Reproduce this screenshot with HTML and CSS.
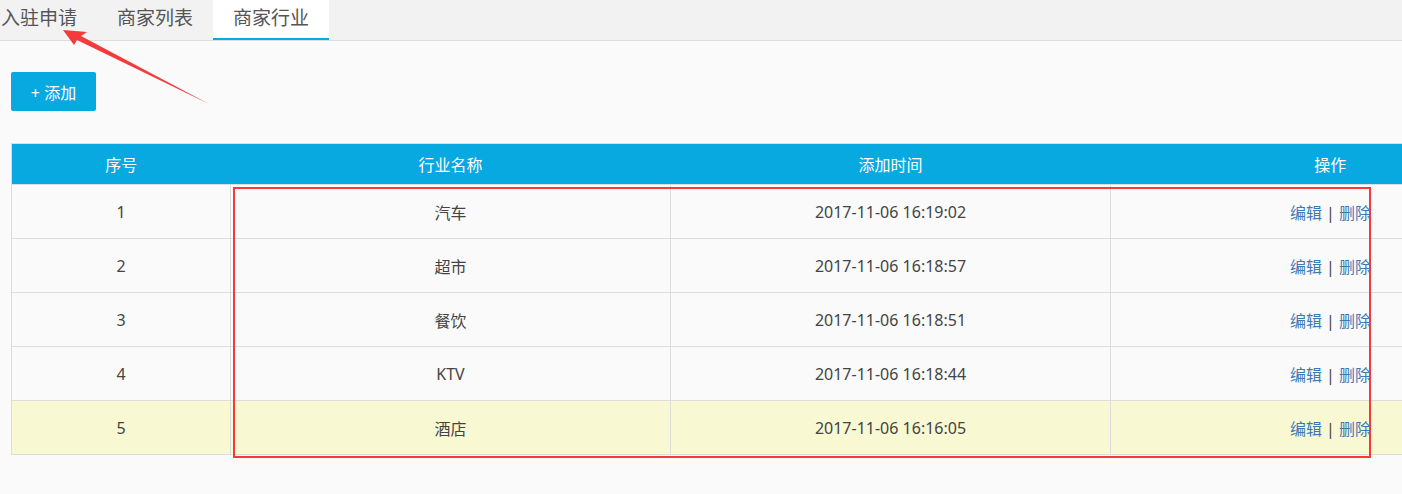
FILE: index.html
```html
<!DOCTYPE html>
<html lang="zh-CN">
<head>
    <meta charset="UTF-8">
    <title>商家行业</title>
    <link rel="stylesheet" href="styles.css">
</head>
<body>
    <div class="tabs">
        <div class="tab">入驻申请</div>
        <div class="tab">商家列表</div>
        <div class="tab active">商家行业</div>
    </div>

    <div class="content">
        <button class="add-btn">+ 添加</button>

        <table class="list">
            <colgroup>
                <col class="col-no">
                <col class="col-wide">
                <col class="col-wide">
                <col class="col-wide">
            </colgroup>
            <thead>
                <tr>
                    <th>序号</th>
                    <th>行业名称</th>
                    <th>添加时间</th>
                    <th>操作</th>
                </tr>
            </thead>
            <tbody>
                <tr>
                    <td>1</td>
                    <td>汽车</td>
                    <td>2017-11-06 16:19:02</td>
                    <td><a href="#">编辑</a> | <a href="#">删除</a></td>
                </tr>
                <tr>
                    <td>2</td>
                    <td>超市</td>
                    <td>2017-11-06 16:18:57</td>
                    <td><a href="#">编辑</a> | <a href="#">删除</a></td>
                </tr>
                <tr>
                    <td>3</td>
                    <td>餐饮</td>
                    <td>2017-11-06 16:18:51</td>
                    <td><a href="#">编辑</a> | <a href="#">删除</a></td>
                </tr>
                <tr>
                    <td>4</td>
                    <td>KTV</td>
                    <td>2017-11-06 16:18:44</td>
                    <td><a href="#">编辑</a> | <a href="#">删除</a></td>
                </tr>
                <tr class="hover">
                    <td>5</td>
                    <td>酒店</td>
                    <td>2017-11-06 16:16:05</td>
                    <td><a href="#">编辑</a> | <a href="#">删除</a></td>
                </tr>
            </tbody>
        </table>
    </div>

    <!-- annotations drawn over the screenshot -->
    <div class="mark-box"></div>
    <svg class="mark-arrow" width="220" height="110" viewBox="0 0 220 110">
        <polygon points="63,30 87,32 81,36 209,104 77,40 74,45" fill="#f43a3a"/>
    </svg>
</body>
</html>
```

FILE: styles.css
```css
body {
    margin: 0;
    background-color: #fafafa;
    font-family: "Noto Sans", "Noto Sans CJK SC", sans-serif;
    color: #444;
    overflow: hidden;
    position: relative;
    height: 494px;
}

.tabs {
    display: flex;
    height: 40px;
    margin-left: -19px;
    background-color: #f2f2f2;
    border-bottom: 1px solid #dddddd;
}

.tab {
    padding: 0 20px;
    height: 40px;
    line-height: 36px;
    font-size: 19px;
    color: #555;
    box-sizing: border-box;
}

.tab.active {
    background-color: #ffffff;
    border-bottom: 2px solid #08a8e0;
}

.content {
    padding: 31px 0 0 11px;
}

.add-btn {
    display: block;
    width: 85px;
    height: 39px;
    padding: 0;
    border: none;
    border-radius: 2px;
    background-color: #08a8e0;
    color: #ffffff;
    font-family: inherit;
    font-size: 16px;
    cursor: pointer;
}

.list {
    margin-top: 32px;
    width: 1538px;
    border-collapse: collapse;
    table-layout: fixed;
    font-size: 16px;
    border: 1px solid #dddddd;
}

.col-no {
    width: 219px;
}

.col-wide {
    width: 440px;
}

.list th {
    height: 40px;
    padding: 0;
    background-color: #08a8e0;
    color: #ffffff;
    font-weight: normal;
    font-size: 16px;
}

.list td {
    height: 53px;
    padding: 0;
    text-align: center;
    border: 1px solid #dddddd;
    color: #444;
}

.list tr.hover td {
    background-color: #f8f8d3;
}

.list a {
    color: #3a7ab8;
    text-decoration: none;
}

.mark-box {
    position: absolute;
    left: 233px;
    top: 187px;
    width: 1134px;
    height: 267px;
    border: 2px solid #f43a3a;
}

.mark-arrow {
    position: absolute;
    left: 0;
    top: 0;
}
```
